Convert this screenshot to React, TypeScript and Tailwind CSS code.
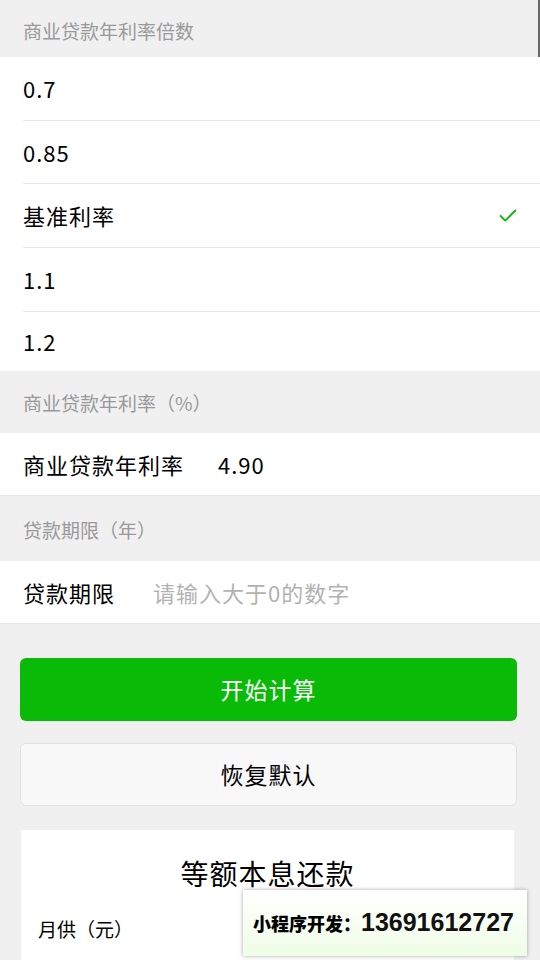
import { Check } from "lucide-react";

const cjk = { fontFamily: '"Noto Sans CJK SC", "Noto Sans", sans-serif' };

function SectionHeader({ title, h, pt }: { title: string; h: string; pt: string }) {
	return (
		<div className={`${h} ${pt} bg-[#f0f0f0] px-[23px] text-[19px] leading-[24px] text-[#999999]`}>
			{title}
		</div>
	);
}

function Divider({ inset }: { inset?: boolean }) {
	return <div className={`h-px bg-[#e5e5e5] ${inset ? "ml-[23px]" : ""}`} />;
}

export default function App() {
	const options = [
		{ label: "0.7", h: "h-[63px]" },
		{ label: "0.85", h: "h-[62px]" },
		{ label: "基准利率", h: "h-[63px]" },
		{ label: "1.1", h: "h-[63px]" },
		{ label: "1.2", h: "h-[59px]" },
	];
	const selected = "基准利率";

	return (
		<div className="relative h-[960px] w-[540px] overflow-hidden bg-[#f0f0f0]" style={cjk}>
			{/* scrollbar thumb */}
			<div className="absolute right-0 top-0 h-[57px] w-[2px] bg-[#666666]" />

			<SectionHeader title="商业贷款年利率倍数" h="h-[57px]" pt="pt-[19px]" />
			<div className="bg-white">
				{options.map((opt, i) => (
					<div key={opt.label}>
						{i > 0 && <Divider inset />}
						<div
							className={`flex ${opt.h} items-center justify-between px-[23px] text-[22px] tracking-[1px] text-black`}
						>
							<span>{opt.label}</span>
							{opt.label === selected && (
								<Check className="mr-[-2px] h-[22px] w-[22px] text-[#09bb07]" strokeWidth={2} />
							)}
						</div>
					</div>
				))}
			</div>

			<SectionHeader title="商业贷款年利率（%）" h="h-[62px]" pt="pt-[20px]" />
			<div className="flex h-[62px] items-center bg-white px-[23px] text-[22px] tracking-[1px] text-black">
				<span className="w-[195px]">商业贷款年利率</span>
				<span>4.90</span>
			</div>
			<Divider />

			<SectionHeader title="贷款期限（年）" h="h-[65px]" pt="pt-[22px]" />
			<div className="flex h-[62px] items-center bg-white px-[23px] text-[22px] tracking-[1px]">
				<span className="w-[130px] text-black">贷款期限</span>
				<span className="text-[#b2b2b2]">请输入大于0的数字</span>
			</div>
			<Divider />

			<div className="flex flex-col gap-[22px] pl-[20px] pr-[23px] pt-[34px]">
				<button className="h-[63px] rounded-[6px] bg-[#09bb07] text-[23px] tracking-[1px] text-white">
					开始计算
				</button>
				<button className="h-[63px] rounded-[6px] border border-[#e2e2e2] bg-[#f8f8f8] text-[23px] tracking-[1px] text-black">
					恢复默认
				</button>
			</div>

			<div className="mx-[21px] mt-[24px] h-[200px] w-[493px] bg-white">
				<div className="pt-[24px] text-center text-[28px] leading-[38px] tracking-[1px] text-black">
					等额本息还款
				</div>
				<div className="mt-[23px] px-[17px] text-[19px] text-black">月供（元）</div>
			</div>

			{/* watermark overlay */}
			<div className="absolute left-[243px] top-[890px] flex h-[66px] w-[284px] items-center bg-gradient-to-b from-white to-[#effde6] pl-[10px] shadow-[0_0_4px_rgba(0,0,0,0.35)]">
				<span className="text-[18px] font-black text-black">小程序开发：</span>
				<span
					className="text-[25px] font-bold text-[#111111]"
					style={{ fontFamily: '"Liberation Sans", Arial, sans-serif' }}
				>
					13691612727
				</span>
			</div>
		</div>
	);
}
